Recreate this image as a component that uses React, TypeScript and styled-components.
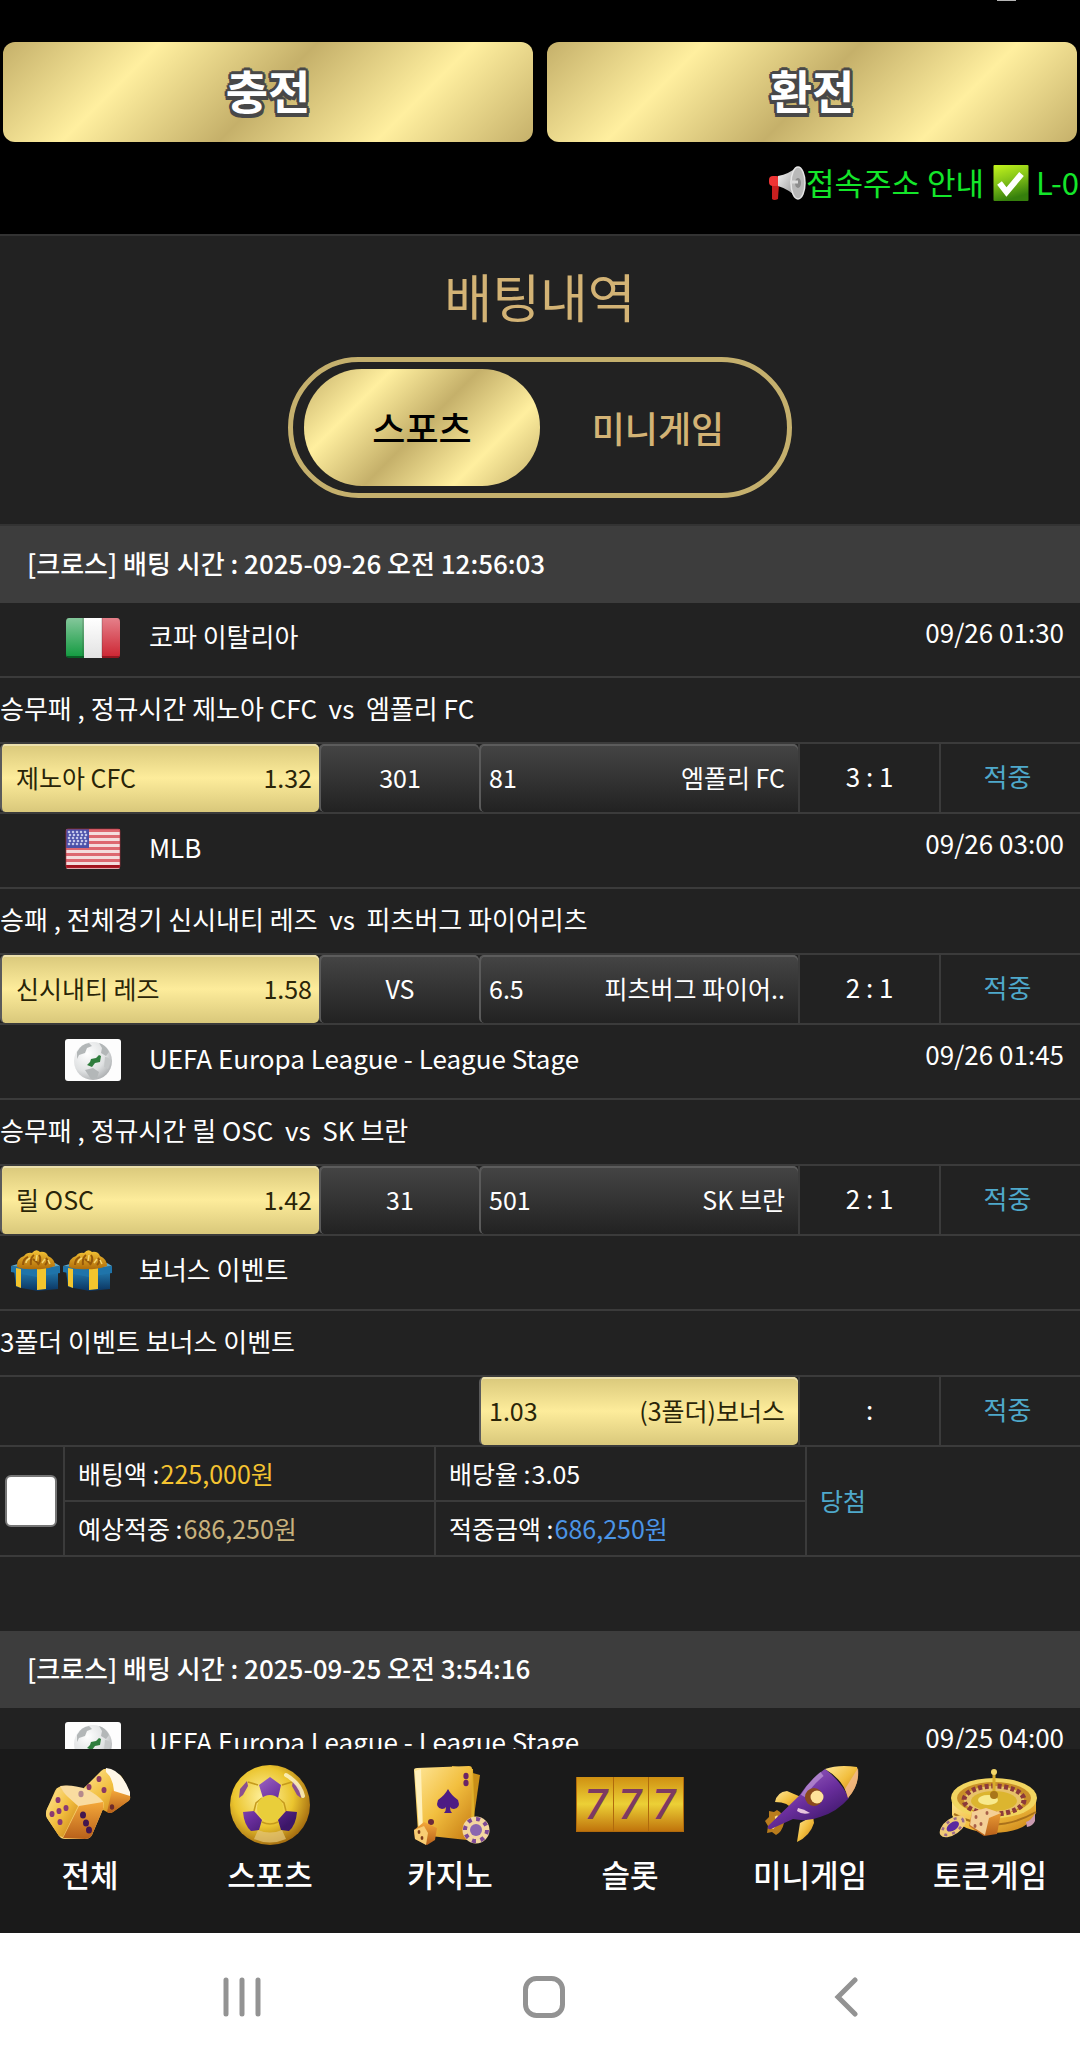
import React from "react";
import styled, { createGlobalStyle } from "styled-components";

const GOLD = "linear-gradient(135deg, #c5b06a 0%, #ffef9f 25%, #c5b06a 50%, #ffef9f 75%, #c5b06a 100%)";
const LINE = "#3b3b3b";

const GlobalStyle = createGlobalStyle`
  * { box-sizing: border-box; }
  html, body { margin: 0; background: #222; }
  body, button, input {
    font-family: "Noto Sans CJK KR", "Noto Sans", sans-serif;
  }
  h1, h2, p { margin: 0; font-weight: 400; }
`;

const Page = styled.div`
  display: flex;
  flex-direction: column;
  height: 100vh;
  overflow: hidden;
  color: #fff;
  font-size: 26px;
  line-height: 34px;
`;

const Scroller = styled.main`
  flex: 1;
  min-height: 0;
  overflow-y: auto;
  scrollbar-width: none;
  background: #222;
`;

/* ---------- top area ---------- */

const TopBar = styled.header`
  display: flex;
  flex-direction: column;
  background: #000;
  border-bottom: 2px solid #333;
`;

const StatusStrip = styled.div`
  display: flex;
  justify-content: flex-end;
  height: 42px;
  padding-right: 64px;
`;

const StatusMark = styled.span`
  width: 19px;
  height: 1px;
  background: #b5b5b5;
`;

const CashRow = styled.div`
  display: grid;
  grid-template-columns: 1fr 1fr;
  gap: 14px;
  padding: 0 3px;
`;

const CashButton = styled.button`
  height: 100px;
  padding: 0 0 6px;
  border: 0;
  border-radius: 12px;
  background: ${GOLD};
  color: #fff;
  font-size: 46px;
  line-height: 60px;
  font-weight: 700;
  text-shadow: -2px -2px 0 #484848, 0 -3px 0 #484848, 2px -2px 0 #484848, 3px 0 0 #484848,
    2px 2px 0 #484848, 0 3px 0 #484848, -2px 2px 0 #484848, -3px 0 0 #484848,
    2px 4px 0 #484848, -2px 4px 0 #484848;
`;

const Notice = styled.div`
  display: flex;
  align-items: center;
  height: 92px;
  padding-bottom: 10px;
  padding-left: calc(100% - 311px);
  overflow: hidden;
  white-space: pre;
  color: #14e62a;
  font-size: 31px;
  line-height: 40px;

  svg { flex: none; }
`;

const NoticeText = styled.span`
  margin-right: 2px;
  padding-bottom: 3px;
`;

/* ---------- title and tabs ---------- */

const Hero = styled.section`
  display: flex;
  flex-direction: column;
  align-items: center;
  padding: 22px 0 26px;
`;

const Title = styled.h1`
  color: #d3b375;
  font-size: 52px;
  line-height: 76px;
`;

const Tabs = styled.div`
  display: grid;
  grid-template-columns: 236px 236px;
  margin-top: 23px;
  padding: 7px 11px;
  border: 5px solid #c5b06d;
  border-radius: 71px;
`;

const Tab = styled.button<{ $active?: boolean }>`
  height: 117px;
  padding: 0 0 2px;
  border: 0;
  border-radius: 58px;
  background: ${(p) => (p.$active ? GOLD : "transparent")};
  color: ${(p) => (p.$active ? "#000" : "#d3b375")};
  font-size: 36px;
  line-height: 52px;
  font-weight: 500;
`;

/* ---------- bet slips ---------- */

const Slips = styled.div`
  display: flex;
  flex-direction: column;
  gap: 74px;
  border-top: 2px solid #333;
`;

const SlipHead = styled.h2`
  display: flex;
  align-items: center;
  height: 77px;
  padding: 0 0 4px 27px;
  background: #3d3d3d;
  font-size: 26px;
  line-height: 34px;
  font-weight: 500;
`;

const LeagueRow = styled.div<{ $bonus?: boolean }>`
  display: flex;
  align-items: flex-start;
  height: 75px;
  padding: 14px 16px 0 ${(p) => (p.$bonus ? "11px" : "65px")};
  border-bottom: 2px solid ${LINE};

  svg { flex: none; }
`;

const Icons = styled.span`
  display: flex;
  gap: 3px;
`;

const LeagueName = styled.span<{ $bonus?: boolean }>`
  flex: 1;
  margin-left: ${(p) => (p.$bonus ? "27px" : "28px")};
  line-height: 38px;
`;

const KickOff = styled.time`
  line-height: 30px;
`;

const MatchRow = styled.p`
  display: flex;
  align-items: center;
  height: 66px;
  padding-bottom: 4px;
  border-bottom: 2px solid ${LINE};
  white-space: pre;
`;

const OddsRow = styled.div`
  display: grid;
  grid-template-columns: 319fr 160fr 319fr 141fr 141fr;
  height: 70px;
  border-bottom: 2px solid ${LINE};
`;

const Pick = styled.button<{ $picked?: boolean; $side?: "home" | "away" }>`
  display: flex;
  align-items: center;
  justify-content: ${(p) => (p.$side ? "space-between" : "center")};
  height: 68px;
  margin: 0;
  padding: ${(p) => (p.$side === "home" ? "0 7px 3px 14px" : p.$side === "away" ? "0 13px 3px 8px" : "0 0 3px")};
  border: 0;
  border-left: 2px solid #5a5a5a;
  border-radius: 5px;
  color: ${(p) => (p.$picked ? "#2a2508" : "#fff")};
  background: ${(p) =>
    p.$picked
      ? "linear-gradient(180deg, #d9c87b, #fdec9b 50%, #d9c87b)"
      : "linear-gradient(180deg, #454545, #222)"};
  box-shadow: inset 0 2px 0 ${(p) => (p.$picked ? "#ece0ac" : "#5c5c5c")};
  font-size: 25px;
  line-height: 34px;
`;

const Blank = styled.span``;

const Cell = styled.span<{ $win?: boolean }>`
  display: flex;
  align-items: center;
  justify-content: center;
  padding: 0 ${(p) => (p.$win ? "6px" : "0")} 4px 0;
  border-left: 2px solid ${LINE};
  color: ${(p) => (p.$win ? "#4fa9cb" : "#fff")};
`;

const Summary = styled.div`
  display: grid;
  grid-template-columns: 65px 371fr 371fr 273fr;
  grid-template-rows: 55px 53px;
  border-bottom: 2px solid ${LINE};
  font-size: 25px;
`;

const TickCell = styled.div`
  grid-row: span 2;
  display: flex;
  align-items: center;
  padding-left: 5px;
  border-right: 2px solid ${LINE};
`;

const Tick = styled.input`
  appearance: none;
  width: 52px;
  height: 52px;
  margin: 0;
  border: 2px solid #767676;
  border-radius: 6px;
  background: #fff;

  &:checked { background: #4fa9cb; }
`;

const Amount = styled.span<{ $top?: boolean }>`
  display: flex;
  align-items: center;
  gap: 1px;
  padding: 0 0 2px 13px;
  border-right: 2px solid ${LINE};
  border-bottom: ${(p) => (p.$top ? `2px solid ${LINE}` : "0")};
`;

const Value = styled.span<{ $color: string }>`
  color: ${(p) => p.$color};
`;

const Outcome = styled.span`
  grid-row: span 2;
  display: flex;
  align-items: center;
  padding: 0 0 2px 13px;
  color: #4fa9cb;
`;

/* ---------- bottom bars ---------- */

const GameNav = styled.nav`
  display: grid;
  grid-template-columns: repeat(6, 1fr);
  flex: none;
  height: 184px;
  padding-top: 15px;
  background: #1a1a1a;
`;

const GameLink = styled.a`
  display: flex;
  flex-direction: column;
  align-items: center;
  gap: 6px;
  color: #fff;
  font-size: 31px;
  line-height: 44px;
  font-weight: 500;
  text-decoration: none;
`;

const SystemBar = styled.nav`
  display: grid;
  grid-template-columns: repeat(3, 1fr);
  flex: none;
  height: 126px;
  padding: 0 83px 0 91px;
  background: #fff;
`;

const SystemButton = styled.button`
  display: flex;
  align-items: center;
  justify-content: center;
  padding: 2px 0 0;
  border: 0;
  background: none;
`;

/* ---------- drawings ---------- */

const Megaphone = () => (
  <svg width="37" height="36" viewBox="0 0 37 36" aria-hidden="true">
    <defs>
      <linearGradient id="horn" x1="0" x2="1" y1="0" y2="1">
        <stop offset="0" stopColor="#fafafa" />
        <stop offset="1" stopColor="#8a8a8a" />
      </linearGradient>
    </defs>
    <path d="M3 19h7l-1 15q-4 2-6 0z" fill="#c81f1f" />
    <rect x="0" y="11" width="11" height="10" rx="4" fill="#ee3434" />
    <path d="M9 11Q20 9 28 2l1 32Q20 24 9 21z" fill="url(#horn)" />
    <ellipse cx="29" cy="18" rx="7" ry="16" fill="#b9b9b9" stroke="#e6e6e6" strokeWidth="1.5" />
    <ellipse cx="29" cy="18" rx="3" ry="5" fill="#8d8d8d" />
    <path d="M21 17h8" stroke="#ddd" strokeWidth="3" />
  </svg>
);

const CheckBadge = () => (
  <svg width="36" height="36" viewBox="0 0 35 36" aria-hidden="true">
    <defs>
      <linearGradient id="check" x1="0" x2="0.3" y1="0" y2="1">
        <stop offset="0" stopColor="#c4f51c" />
        <stop offset="0.5" stopColor="#84c318" />
        <stop offset="1" stopColor="#357f0c" />
      </linearGradient>
    </defs>
    <rect width="35" height="36" rx="1" fill="url(#check)" />
    <path d="M6 18l7 9L28 9" fill="none" stroke="#fff" strokeWidth="6" />
  </svg>
);

const Italy = () => (
  <svg width="56" height="42" viewBox="0 0 56 42" role="img" aria-label="이탈리아">
    <defs>
      <linearGradient id="itg" x1="0" x2="0" y1="0" y2="1">
        <stop offset="0" stopColor="#84c79b" />
        <stop offset="1" stopColor="#109a3e" />
      </linearGradient>
      <linearGradient id="itr" x1="0" x2="0" y1="0" y2="1">
        <stop offset="0" stopColor="#e5808a" />
        <stop offset="1" stopColor="#cc2431" />
      </linearGradient>
      <linearGradient id="itw" x1="0" x2="0" y1="0" y2="1">
        <stop offset="0" stopColor="#fff" />
        <stop offset="1" stopColor="#e2e2e2" />
      </linearGradient>
    </defs>
    <path d="M4 1h15v40H4q-3 0-3-4V5q0-4 3-4z" fill="url(#itg)" />
    <rect x="19" y="1" width="18" height="40" fill="url(#itw)" />
    <path d="M37 1h15q3 0 3 4v32q0 4-3 4H37z" fill="url(#itr)" />
    <path d="M18 1v39M37 1v39" stroke="#3a2020" strokeOpacity=".3" />
    <path d="M2 40h17" stroke="#05461b" strokeOpacity=".7" strokeWidth="2" />
    <path d="M37 40h17" stroke="#7a0f18" strokeOpacity=".7" strokeWidth="2" />
  </svg>
);

const Usa = () => (
  <svg width="56" height="42" viewBox="0 0 56 42" role="img" aria-label="미국">
    <rect x="1" y="1" width="54" height="40" rx="2" fill="#f4dcdd" />
    {[0, 1, 2, 3, 4, 5, 6].map((i) => (
      <rect key={i} x="1" y={1 + i * 6} width="54" height="3" fill={i === 6 ? "#a3121d" : "#dd6770"} />
    ))}
    <rect x="1" y="1" width="23" height="19" fill="#4a50a8" />
    {[0, 1, 2, 3, 4].map((r) =>
      [0, 1, 2, 3, 4].map((c) => (
        <circle key={`${r}-${c}`} cx={4 + c * 4 + (r % 2)} cy={4 + r * 3} r="1.3" fill="#c3c6ea" />
      )),
    )}
    <rect x="1" y="1" width="54" height="39" rx="2" fill="none" stroke="#b9343f" strokeOpacity=".6" />
  </svg>
);

const Globe = () => (
  <svg width="56" height="42" viewBox="0 0 56 42" role="img" aria-label="국제">
    <defs>
      <radialGradient id="globe" cx="0.35" cy="0.3" r="0.8">
        <stop offset="0" stopColor="#fff" />
        <stop offset="0.6" stopColor="#dfe1e2" />
        <stop offset="1" stopColor="#a4a7a9" />
      </radialGradient>
    </defs>
    <rect width="56" height="42" rx="3" fill="#fdfdfd" />
    <circle cx="28" cy="22" r="19" fill="url(#globe)" />
    <path d="M12 13q4-8 12-9l3 3-5 2-2 5-6 2-2 4zM34 4q7 2 10 9l-3 4-5-3 1-5zM20 31l8-2 6 4-2 6-6 1z" fill="#b3b7b8" />
    <path d="M40 18q4 0 6 4l-3 8-4-2z" fill="#c4c7c8" />
    <path d="M34 16l2 1-1 6-5 1-3 4-5-2 3-3 1-3 5-1z" fill="#2f7d3d" />
  </svg>
);

const Gift = () => (
  <svg width="49" height="42" viewBox="0 0 49 42" aria-hidden="true">
    <defs>
      <linearGradient id="box" x1="0" x2="0" y1="0" y2="1">
        <stop offset="0" stopColor="#2580b5" />
        <stop offset="1" stopColor="#0b3460" />
      </linearGradient>
      <linearGradient id="bow" x1="0" x2="0" y1="0" y2="1">
        <stop offset="0" stopColor="#f5c436" />
        <stop offset="1" stopColor="#b06c08" />
      </linearGradient>
    </defs>
    <path d="M3 20l24 2 20-3v20l-20 2-22-4z" fill="url(#box)" />
    <path d="M0 16l26 3 23-3v7l-23 4L0 22z" fill="#1f74aa" />
    <path d="M0 16l10-3 34 0 5 3-23 3z" fill="#5aa9d0" />
    <path d="M5 18l5 1v19l-5-2zM26 19l9-1v21l-9 1z" fill="#f3c52d" />
    <path d="M6 17q-1-8 7-11 3-4 8-3 4-5 8-1 6-1 8 4 7 3 7 10-9 4-19 3-12 1-19-2z" fill="url(#bow)" />
    <path d="M12 15q0-6 5-8M20 15q-1-7 3-10M27 15q4-6 1-10M34 15q4-4 1-7M22 9l6 5" fill="none" stroke="#96590a" strokeWidth="2" />
    <path d="M15 13q0-3 4-5M25 11l1-6M31 13l3-4M39 14l-2-4" fill="none" stroke="#f4d774" strokeWidth="1.5" />
  </svg>
);

const GoldDefs = () => (
  <defs>
    <linearGradient id="gA" x1="0" x2="1" y1="0" y2="1">
      <stop offset="0" stopColor="#ffe79a" />
      <stop offset="0.5" stopColor="#f2bf3f" />
      <stop offset="1" stopColor="#c57a12" />
    </linearGradient>
    <linearGradient id="gB" x1="0" x2="0" y1="0" y2="1">
      <stop offset="0" stopColor="#f4a83a" />
      <stop offset="1" stopColor="#b8601a" />
    </linearGradient>
    <radialGradient id="gBall" cx="0.42" cy="0.4" r="0.62">
      <stop offset="0" stopColor="#fff2a0" />
      <stop offset="0.6" stopColor="#ebc52f" />
      <stop offset="1" stopColor="#a56d10" />
    </radialGradient>
    <linearGradient id="gReel" x1="0" x2="0" y1="0" y2="1">
      <stop offset="0" stopColor="#cf9012" />
      <stop offset="0.5" stopColor="#ecd036" />
      <stop offset="1" stopColor="#c0740c" />
    </linearGradient>
    <linearGradient id="gViolet" x1="0.2" x2="0.8" y1="0.1" y2="0.9">
      <stop offset="0" stopColor="#9a62c0" />
      <stop offset="0.5" stopColor="#6b2f9e" />
      <stop offset="1" stopColor="#3c1668" />
    </linearGradient>
  </defs>
);

const Art = ({ children }: { children: React.ReactNode }) => (
  <svg width="108" height="82" viewBox="0 0 108 82" aria-hidden="true">
    <GoldDefs />
    {children}
  </svg>
);

const dots = (points: number[][], fill: string, r = 2.6) =>
  points.map(([x, y], i) => <ellipse key={i} cx={x} cy={y} rx={r} ry={r + 0.6} fill={fill} />);

const Dice = () => (
  <Art>
    <path d="M45 29Q46 25 51 21L65 7q4-4 9-1l10 5q4 3 10 21 1 4-3 6L77 48q-3 2-6 0L48 36q-4-3-3-7z" fill="url(#gA)" />
    <path d="M76 26l18 6q1 4-3 6L77 48q-3 2-6 0z" fill="url(#gB)" />
    <path d="M70 4q15 1 24 24l0 4-16-5q-1-13-8-19z" fill="#fff7e8" />
    <path d="M23 23q4-2 10-1l16 3q12 5 18 12 2 3 0 8L56 71q-2 4-7 4L29 75q-4 0-6-3L11 54q-2-4 0-9l8-18q1-3 4-4z" fill="#f6cf6b" />
    <path d="M24 22q12-2 26 3 12 6 17 13-8 5-24 5Q30 34 24 22z" fill="#f9dca0" />
    <path d="M22 24l20 18-15 31-4-1L11 54q-2-4 0-9z" fill="url(#gA)" />
    <path d="M43 42l24-4q1 3 0 7L56 71q-2 4-7 4l-22-1z" fill="url(#gB)" />
    {dots([[22, 36], [16, 50], [23, 47], [30, 44], [24, 58]], "#8a3a72", 2.5)}
    {dots([[47, 51], [50, 59], [53, 66]], "#43164f", 3)}
    {dots([[45, 30]], "#b58a8c", 2.6)}
    {dots([[63, 15], [53, 23], [68, 26]], "#8a3a62", 2.5)}
    {dots([[76, 43]], "#6d2a2a", 2.2)}
  </Art>
);

const Ball = () => (
  <Art>
    <circle cx="54" cy="41" r="40" fill="url(#gBall)" />
    <path d="M54 13l11 8-3 13H47l-4-13zM27 48l11-1 8 9-3 10-8 1q-7-6-8-19zM81 48l-11-1-8 9 3 10 8 1q7-6 8-19z" fill="url(#gViolet)" />
    <path d="M23 34l1-9 7-8 1 5-5 9zM85 34l-1-9-7-8-1 5 5 9z" fill="#8b4f8e" />
    <path d="M46 34l-6 5-2 8M62 34l6 5 2 8M46 58q8 4 16 0M42 21l-10-3M66 21l10-3" fill="none" stroke="#c59a1c" strokeWidth="1.5" />
    <circle cx="54" cy="44" r="13" fill="#e9ce3a" />
    <path d="M70 11q14 8 17 21" stroke="#fff6d0" strokeOpacity=".8" strokeWidth="4" fill="none" strokeLinecap="round" />
    <path d="M42 66q12 5 24 0l4 9q-16 7-32 0z" fill="#e6c87a" opacity=".7" />
  </Art>
);

const Cards = () => (
  <Art>
    <path d="M62 5l22 6-9 62-20-5z" fill="#c98f18" />
    <path d="M56 2l21 3 2 68-24-3z" fill="#e2b02b" />
    <path d="M18 6q0-2 3-2l52-2q3 0 3 3l-1 68q0 4-4 3L25 71q-2 0-3-3z" fill="url(#gA)" />
    <path d="M19 7l6-2 2 64-4-1z" fill="#fff0bb" />
    <path d="M52 25q3 6 10 11 3 8-4 9-3 0-4-2 0 4 2 6h-8q2-2 2-6-1 2-4 2-7-1-4-9 7-5 10-11z" fill="#4d1c84" />
    {dots([[70, 12], [70, 19]], "#6b2466", 2.6)}
    <circle cx="35" cy="58" r="3" fill="#6b2a3a" />
    <path d="M18 66l10-8 13 6-2 12-8 5-12-6z" fill="url(#gB)" />
    <path d="M18 66l10-4 4 7-2 12-11-6z" fill="#f8cd74" />
    {dots([[23, 68], [26, 74]], "#7b3a1a", 1.4)}
    <circle cx="80" cy="66" r="13.5" fill="#f3d6a0" />
    <circle cx="80" cy="66" r="11" fill="none" stroke="#7e4a96" strokeWidth="4" strokeDasharray="4 4.6" />
    <circle cx="80" cy="66" r="6" fill="#8a66b0" />
  </Art>
);

const Slot = () => (
  <Art>
    <rect y="13" width="108" height="55" fill="#b06a0c" />
    <rect x="1" y="13" width="36" height="54" fill="url(#gReel)" />
    <rect x="38" y="13" width="34" height="54" fill="url(#gReel)" />
    <rect x="73" y="13" width="34" height="54" fill="url(#gReel)" />
    <g fill="#7d3a62" fontFamily="Roboto, sans-serif" fontSize="42" fontStyle="italic" textAnchor="middle">
      <text x="20" y="55">7</text>
      <text x="54" y="55">7</text>
      <text x="88" y="55">7</text>
    </g>
  </Art>
);

const Rocket = () => (
  <Art>
    <path d="M21 46q8 4 7 13-2 9-8 12l-4-3-5 1 1-7-3-5 4-4 0-6 5 1z" fill="#b97c1d" />
    <path d="M20 52q3 6-4 12" stroke="#ffe08a" strokeWidth="3" fill="none" />
    <path d="M19 38q2-10 12-11l14 6-9 13q-3-8-17-8z" fill="url(#gA)" />
    <path d="M57 52l1 7q-4 13-17 19l3-19z" fill="url(#gA)" />
    <path d="M69 5Q54 15 43 32L12 62q-1 4 3 3l22-10q15 3 27-2 17-5 29-19Q84 16 69 5z" fill="url(#gViolet)" />
    <path d="M66 10Q54 20 47 32" stroke="#c9a5de" strokeWidth="5" strokeOpacity=".6" fill="none" />
    <path d="M42 44q6 1 12 5-8 2-13-2z" fill="#e7c3dd" />
    <path d="M69 5q14-5 32-2 4 16-9 31Q88 16 69 5z" fill="url(#gA)" />
    <path d="M102 4q2 17-10 30-1-4-3-9z" fill="#f3b98f" opacity=".8" />
    <circle cx="58" cy="33" r="9" fill="#8a4a1c" />
    <circle cx="61" cy="33" r="6.5" fill="#ffe39a" />
  </Art>
);

const Roulette = () => (
  <Art>
    <path d="M16 33v18q6 16 42 18 34-1 42-20V33z" fill="url(#gA)" />
    <path d="M18 50q40 22 82-2" fill="none" stroke="#a9711b" strokeWidth="2" />
    <ellipse cx="58" cy="34" rx="43" ry="20" fill="#f2d560" />
    <ellipse cx="58" cy="34" rx="37" ry="16" fill="#c98f28" />
    <ellipse cx="58" cy="36" rx="30" ry="14" fill="#e8c26a" stroke="#8c3a3a" strokeWidth="5" strokeDasharray="4 2.5" />
    <ellipse cx="58" cy="37" rx="23" ry="10" fill="#dcb52f" />
    <ellipse cx="52" cy="36" rx="10" ry="5" fill="#f8ea8c" />
    <path d="M58 7v25" stroke="#d9ad2c" strokeWidth="3" />
    <circle cx="58" cy="8" r="3" fill="#f3d66a" />
    <circle cx="58" cy="31" r="4" fill="#a9761a" />
    <path d="M90 58q6-2 9-9l0 8q-2 5-8 6z" fill="#c99ab0" />
    <path d="M36 48l14-4 15 5-4 21-13 2-15-10z" fill="url(#gB)" />
    <path d="M36 48l14-4 15 5-12 5-4 17-15-10z" fill="#f4cf96" />
    {dots([[40, 53], [45, 60], [39, 62], [51, 49]], "#a8604a", 1.5)}
    <g transform="rotate(-35 16 63)">
      <ellipse cx="17" cy="63" rx="15" ry="8" fill="#f0cb78" />
      <ellipse cx="17" cy="63" rx="12" ry="6" fill="none" stroke="#9a6a8a" strokeWidth="2.5" strokeDasharray="3 5" />
      <ellipse cx="17" cy="63" rx="7" ry="4" fill="#5a2aa0" />
    </g>
  </Art>
);

/* ---------- data ---------- */

interface Match {
  flag: React.ReactNode;
  league: string;
  time: string;
  detail: string;
  home: [string, string];
  middle: string;
  away: [string, string];
  score: string;
}

const matches: Match[] = [
  {
    flag: <Italy />,
    league: "코파 이탈리아",
    time: "09/26 01:30",
    detail: "승무패 , 정규시간 제노아 CFC  vs  엠폴리 FC",
    home: ["제노아 CFC", "1.32"],
    middle: "301",
    away: ["81", "엠폴리 FC"],
    score: "3 : 1",
  },
  {
    flag: <Usa />,
    league: "MLB",
    time: "09/26 03:00",
    detail: "승패 , 전체경기 신시내티 레즈  vs  피츠버그 파이어리츠",
    home: ["신시내티 레즈", "1.58"],
    middle: "VS",
    away: ["6.5", "피츠버그 파이어.."],
    score: "2 : 1",
  },
  {
    flag: <Globe />,
    league: "UEFA Europa League - League Stage",
    time: "09/26 01:45",
    detail: "승무패 , 정규시간 릴 OSC  vs  SK 브란",
    home: ["릴 OSC", "1.42"],
    middle: "31",
    away: ["501", "SK 브란"],
    score: "2 : 1",
  },
];

const games = [
  { name: "전체", art: <Dice /> },
  { name: "스포츠", art: <Ball /> },
  { name: "카지노", art: <Cards /> },
  { name: "슬롯", art: <Slot /> },
  { name: "미니게임", art: <Rocket /> },
  { name: "토큰게임", art: <Roulette /> },
];

const MatchBlock = ({ match }: { match: Match }) => (
  <>
    <LeagueRow>
      {match.flag}
      <LeagueName>{match.league}</LeagueName>
      <KickOff>{match.time}</KickOff>
    </LeagueRow>
    <MatchRow>{match.detail}</MatchRow>
    <OddsRow>
      <Pick $picked $side="home">
        <span>{match.home[0]}</span>
        <span>{match.home[1]}</span>
      </Pick>
      <Pick>{match.middle}</Pick>
      <Pick $side="away">
        <span>{match.away[0]}</span>
        <span>{match.away[1]}</span>
      </Pick>
      <Cell>{match.score}</Cell>
      <Cell $win>적중</Cell>
    </OddsRow>
  </>
);

export default function App() {
  return (
    <Page>
      <GlobalStyle />
      <Scroller>
        <TopBar>
          <StatusStrip>
            <StatusMark />
          </StatusStrip>
          <CashRow>
            <CashButton>충전</CashButton>
            <CashButton>환전</CashButton>
          </CashRow>
          <Notice>
            <Megaphone />
            <NoticeText>접속주소 안내 </NoticeText>
            <CheckBadge />
            <NoticeText> L-0</NoticeText>
          </Notice>
        </TopBar>

        <Hero>
          <Title>배팅내역</Title>
          <Tabs>
            <Tab $active>스포츠</Tab>
            <Tab>미니게임</Tab>
          </Tabs>
        </Hero>

        <Slips>
          <section>
            <SlipHead>[크로스] 배팅 시간 : 2025-09-26 오전 12:56:03</SlipHead>
            {matches.map((match) => (
              <MatchBlock key={match.league} match={match} />
            ))}
            <LeagueRow $bonus>
              <Icons>
                <Gift />
                <Gift />
              </Icons>
              <LeagueName $bonus>보너스 이벤트</LeagueName>
            </LeagueRow>
            <MatchRow>3폴더 이벤트 보너스 이벤트</MatchRow>
            <OddsRow>
              <Blank />
              <Blank />
              <Pick $picked $side="away">
                <span>1.03</span>
                <span>(3폴더)보너스</span>
              </Pick>
              <Cell>:</Cell>
              <Cell $win>적중</Cell>
            </OddsRow>
            <Summary>
              <TickCell>
                <Tick type="checkbox" aria-label="배팅 선택" />
              </TickCell>
              <Amount $top>
                배팅액 :<Value $color="#f5c431">225,000원</Value>
              </Amount>
              <Amount $top>
                배당율 :<Value $color="#fff">3.05</Value>
              </Amount>
              <Outcome>당첨</Outcome>
              <Amount>
                예상적중 :<Value $color="#c9b27d">686,250원</Value>
              </Amount>
              <Amount>
                적중금액 :<Value $color="#4b94e6">686,250원</Value>
              </Amount>
            </Summary>
          </section>

          <section>
            <SlipHead>[크로스] 배팅 시간 : 2025-09-25 오전 3:54:16</SlipHead>
            <LeagueRow>
              <Globe />
              <LeagueName>UEFA Europa League - League Stage</LeagueName>
              <KickOff>09/25 04:00</KickOff>
            </LeagueRow>
          </section>
        </Slips>
      </Scroller>

      <GameNav>
        {games.map((game) => (
          <GameLink key={game.name} href="#">
            {game.art}
            {game.name}
          </GameLink>
        ))}
      </GameNav>

      <SystemBar>
        <SystemButton aria-label="최근 앱">
          <svg width="38" height="42" viewBox="0 0 38 42" fill="none" stroke="#939393" strokeWidth="5" strokeLinecap="round">
            <path d="M3 4v34M19 4v34M35 4v34" />
          </svg>
        </SystemButton>
        <SystemButton aria-label="홈">
          <svg width="42" height="42" viewBox="0 0 42 42" fill="none" stroke="#939393" strokeWidth="5">
            <rect x="2.5" y="2.5" width="37" height="37" rx="11" />
          </svg>
        </SystemButton>
        <SystemButton aria-label="뒤로">
          <svg width="24" height="42" viewBox="0 0 24 42" fill="none" stroke="#939393" strokeWidth="5" strokeLinecap="round">
            <path d="M21 4L4 21l17 17" />
          </svg>
        </SystemButton>
      </SystemBar>
    </Page>
  );
}
